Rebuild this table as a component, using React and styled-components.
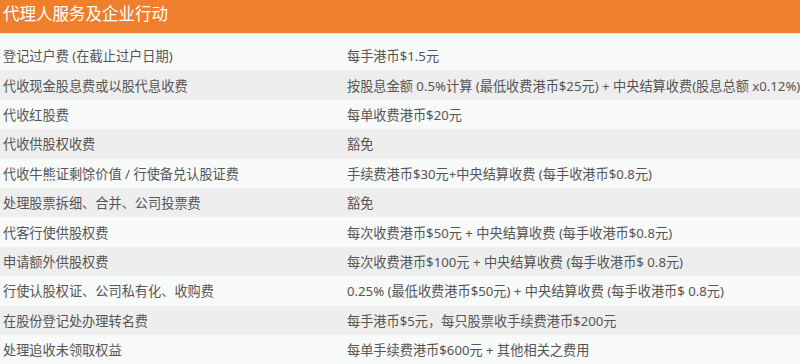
import React from "react";
import styled, { createGlobalStyle } from "styled-components";

const GlobalStyle = createGlobalStyle`
  html, body {
    margin: 0;
    padding: 0;
    background: #f8f9f9;
  }
  * {
    box-sizing: border-box;
  }
`;

const Panel = styled.section`
  width: 800px;
  font-family: "Noto Sans", "Noto Sans CJK SC", sans-serif;
  color: #555;
  background: #f8f9f9;
`;

const Header = styled.h2`
  margin: 0;
  height: 34px;
  padding: 0 3px 7px;
  display: flex;
  align-items: center;
  background: #ef7f2d;
  color: #fff;
  font-size: 16.5px;
  font-weight: 400;
  border-bottom: 1px solid #dfe5ea;
`;

const Body = styled.div`
  padding-top: 7px;
`;

const Row = styled.div`
  display: grid;
  grid-template-columns: 344px 1fr;
  align-items: center;
  height: 29.4px;
  padding-left: 3px;
  font-size: 13.2px;
  white-space: nowrap;
  background: ${(p) => (p.$alt ? "#eeeeee" : "transparent")};
`;

const Cell = styled.div`
  overflow: visible;
`;

const fees = [
  ["登记过户费 (在截止过户日期)", "每手港币$1.5元"],
  ["代收现金股息费或以股代息收费", "按股息金额 0.5%计算 (最低收费港币$25元) + 中央结算收费(股息总额 x0.12%)"],
  ["代收红股费", "每单收费港币$20元"],
  ["代收供股权收费", "豁免"],
  ["代收牛熊证剩馀价值 / 行使备兑认股证费", "手续费港币$30元+中央结算收费 (每手收港币$0.8元)"],
  ["处理股票拆细、合并、公司投票费", "豁免"],
  ["代客行使供股权费", "每次收费港币$50元 + 中央结算收费 (每手收港币$0.8元)"],
  ["申请额外供股权费", "每次收费港币$100元 + 中央结算收费 (每手收港币$ 0.8元)"],
  ["行使认股权证、公司私有化、收购费", "0.25% (最低收费港币$50元) + 中央结算收费 (每手收港币$ 0.8元)"],
  ["在股份登记处办理转名费", "每手港币$5元，每只股票收手续费港币$200元"],
  ["处理追收未领取权益", "每单手续费港币$600元 + 其他相关之费用"],
];

const App = () => {
  return (
    <>
      <GlobalStyle />
      <Panel>
        <Header>代理人服务及企业行动</Header>
        <Body>
          {fees.map(([item, fee], i) => (
            <Row key={item} $alt={i % 2 === 1}>
              <Cell>{item}</Cell>
              <Cell>{fee}</Cell>
            </Row>
          ))}
        </Body>
      </Panel>
    </>
  );
};

export default App;
